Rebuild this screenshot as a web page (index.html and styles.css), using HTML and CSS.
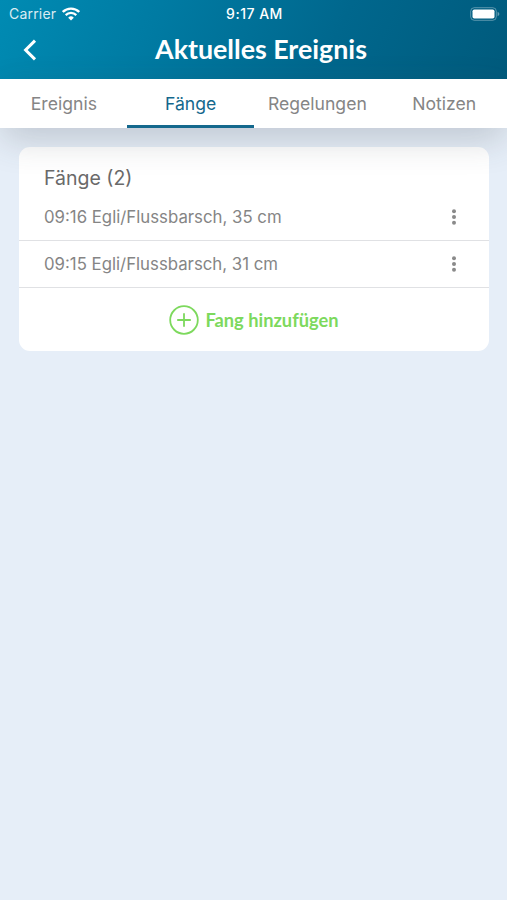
FILE: index.html
```html
<!DOCTYPE html>
<html lang="de">
  <head>
    <title>Aktuelles Ereignis</title>
    <meta charset="utf-8">
    <meta name="viewport" content="width=device-width, initial-scale=1">
    <link rel="stylesheet" href="styles.css">
  </head>
  <body>
    <header>
      <div class="status-bar">
        <div class="carrier">
          <span class="carrier-name">Carrier</span>
          <svg width="18" height="14" viewBox="0 0 18 14" fill="none" stroke="#fff">
            <path d="M.8 5a11.6 11.6 0 0 1 16.4 0" stroke-width="2.4"/>
            <path d="M3.7 8.1a7.5 7.5 0 0 1 10.6 0" stroke-width="2.2"/>
            <path d="M9 13.6L6.2 10.7a4 4 0 0 1 5.6 0z" fill="#fff" stroke="none"/>
          </svg>
        </div>
        <span class="time">9:17 AM</span>
        <div class="battery">
          <svg width="30" height="14" viewBox="0 0 30 14">
            <rect x=".7" y=".7" width="25.6" height="12.6" rx="3.6" fill="none" stroke="#fff" stroke-opacity=".35"/>
            <rect x="2.5" y="2.5" width="22" height="9" rx="1.8" fill="#fff"/>
            <path d="M27.6 4.8v4.4q1.8-.8 1.8-2.2t-1.8-2.2z" fill="#fff" fill-opacity=".4"/>
          </svg>
        </div>
      </div>
      <div class="title-bar">
        <a class="back" href="#" aria-label="Zurück">
          <svg width="14" height="22" viewBox="0 0 14 22" fill="none" stroke="#fff" stroke-width="3">
            <path d="M12 1.6L2.6 11l9.4 9.4"/>
          </svg>
        </a>
        <h1>Aktuelles Ereignis</h1>
      </div>
    </header>

    <nav class="tabs">
      <a class="tab" href="#">Ereignis</a>
      <a class="tab active" href="#">Fänge</a>
      <a class="tab" href="#">Regelungen</a>
      <a class="tab" href="#">Notizen</a>
    </nav>

    <main>
      <section class="card">
        <h2>Fänge (2)</h2>
        <div class="catch first">
          <span>09:16 Egli/Flussbarsch, 35 cm</span>
          <svg width="6" height="16" viewBox="0 0 6 16" fill="#8a8a8a">
            <circle cx="3" cy="2.2" r="2"/><circle cx="3" cy="8" r="2"/><circle cx="3" cy="13.8" r="2"/>
          </svg>
        </div>
        <div class="catch">
          <span>09:15 Egli/Flussbarsch, 31 cm</span>
          <svg width="6" height="16" viewBox="0 0 6 16" fill="#8a8a8a">
            <circle cx="3" cy="2.2" r="2"/><circle cx="3" cy="8" r="2"/><circle cx="3" cy="13.8" r="2"/>
          </svg>
        </div>
        <a class="add" href="#">
          <svg width="30" height="30" viewBox="0 0 30 30" fill="none" stroke="#7dd95d">
            <circle cx="15" cy="15" r="13.8" stroke-width="1.8"/>
            <path d="M15 8.2v13.6M8.2 15h13.6" stroke-width="1.8"/>
          </svg>
          <span>Fang hinzufügen</span>
        </a>
      </section>
    </main>
  </body>
</html>
```
FILE: styles.css
```css
body {
  background-color: #e6eef8;
  color: #858585;
  font-family: Inter, "Liberation Sans", sans-serif;
  margin: 0;
  min-height: 900px;
}

a {
  color: inherit;
  text-decoration: none;
}

svg {
  display: block;
  flex: none;
}

header {
  background: linear-gradient(115deg, #008bb3 0%, #007ba3 30%, #00678d 65%, #005a7c 100%);
  color: #fff;
  height: 79px;
}

.status-bar {
  align-items: center;
  display: grid;
  font-size: 14px;
  grid-template-columns: 1fr auto 1fr;
  height: 27px;
  padding: 0 7px 0 9px;
}

.carrier {
  align-items: center;
  display: flex;
  gap: 6px;
}

.carrier-name {
  letter-spacing: .2px;
  opacity: .85;
}

.time {
  font-weight: 500;
  letter-spacing: .5px;
}

.battery {
  justify-self: end;
}

.title-bar {
  align-items: center;
  display: grid;
  grid-template-columns: 40px 1fr 40px;
  height: 46px;
  padding: 0 8px 0 23px;
}

h1 {
  font-family: Lato, sans-serif;
  font-size: 26.8px;
  font-weight: 700;
  margin: 0 0 2px;
  text-align: center;
}

.tabs {
  background-color: #fff;
  box-shadow: 0 12px 36px -2px rgba(60, 65, 75, .24);
  display: grid;
  grid-template-columns: repeat(4, 1fr);
  height: 49px;
  position: relative;
}

.tab {
  border-bottom: 3px solid transparent;
  box-sizing: border-box;
  font-size: 17.6px;
  line-height: 49px;
  height: 49px;
  padding-left: 1px;
  text-align: center;
}

.tab.active {
  border-color: #14688d;
  color: #14688d;
}

main {
  padding: 19px 18px 0 19px;
}

.card {
  background-color: #fff;
  border-radius: 11px;
  height: 204px;
}

h2 {
  color: #6a6a6a;
  font-size: 19.5px;
  font-weight: 400;
  line-height: 24px;
  margin: 0;
  padding: 19px 25px 0;
}

.catch {
  align-items: center;
  border-bottom: 1.5px solid #e0e1e4;
  box-sizing: border-box;
  display: flex;
  font-size: 16.8px;
  height: 47px;
  justify-content: space-between;
  padding: 0 32px 0 25px;
}

.catch.first {
  height: 51px;
  padding-top: 4px;
}

.add {
  align-items: center;
  color: #7dd95d;
  display: flex;
  font-family: Lato, sans-serif;
  font-size: 18.3px;
  font-weight: 700;
  gap: 6px;
  height: 63px;
  justify-content: center;
}
```
